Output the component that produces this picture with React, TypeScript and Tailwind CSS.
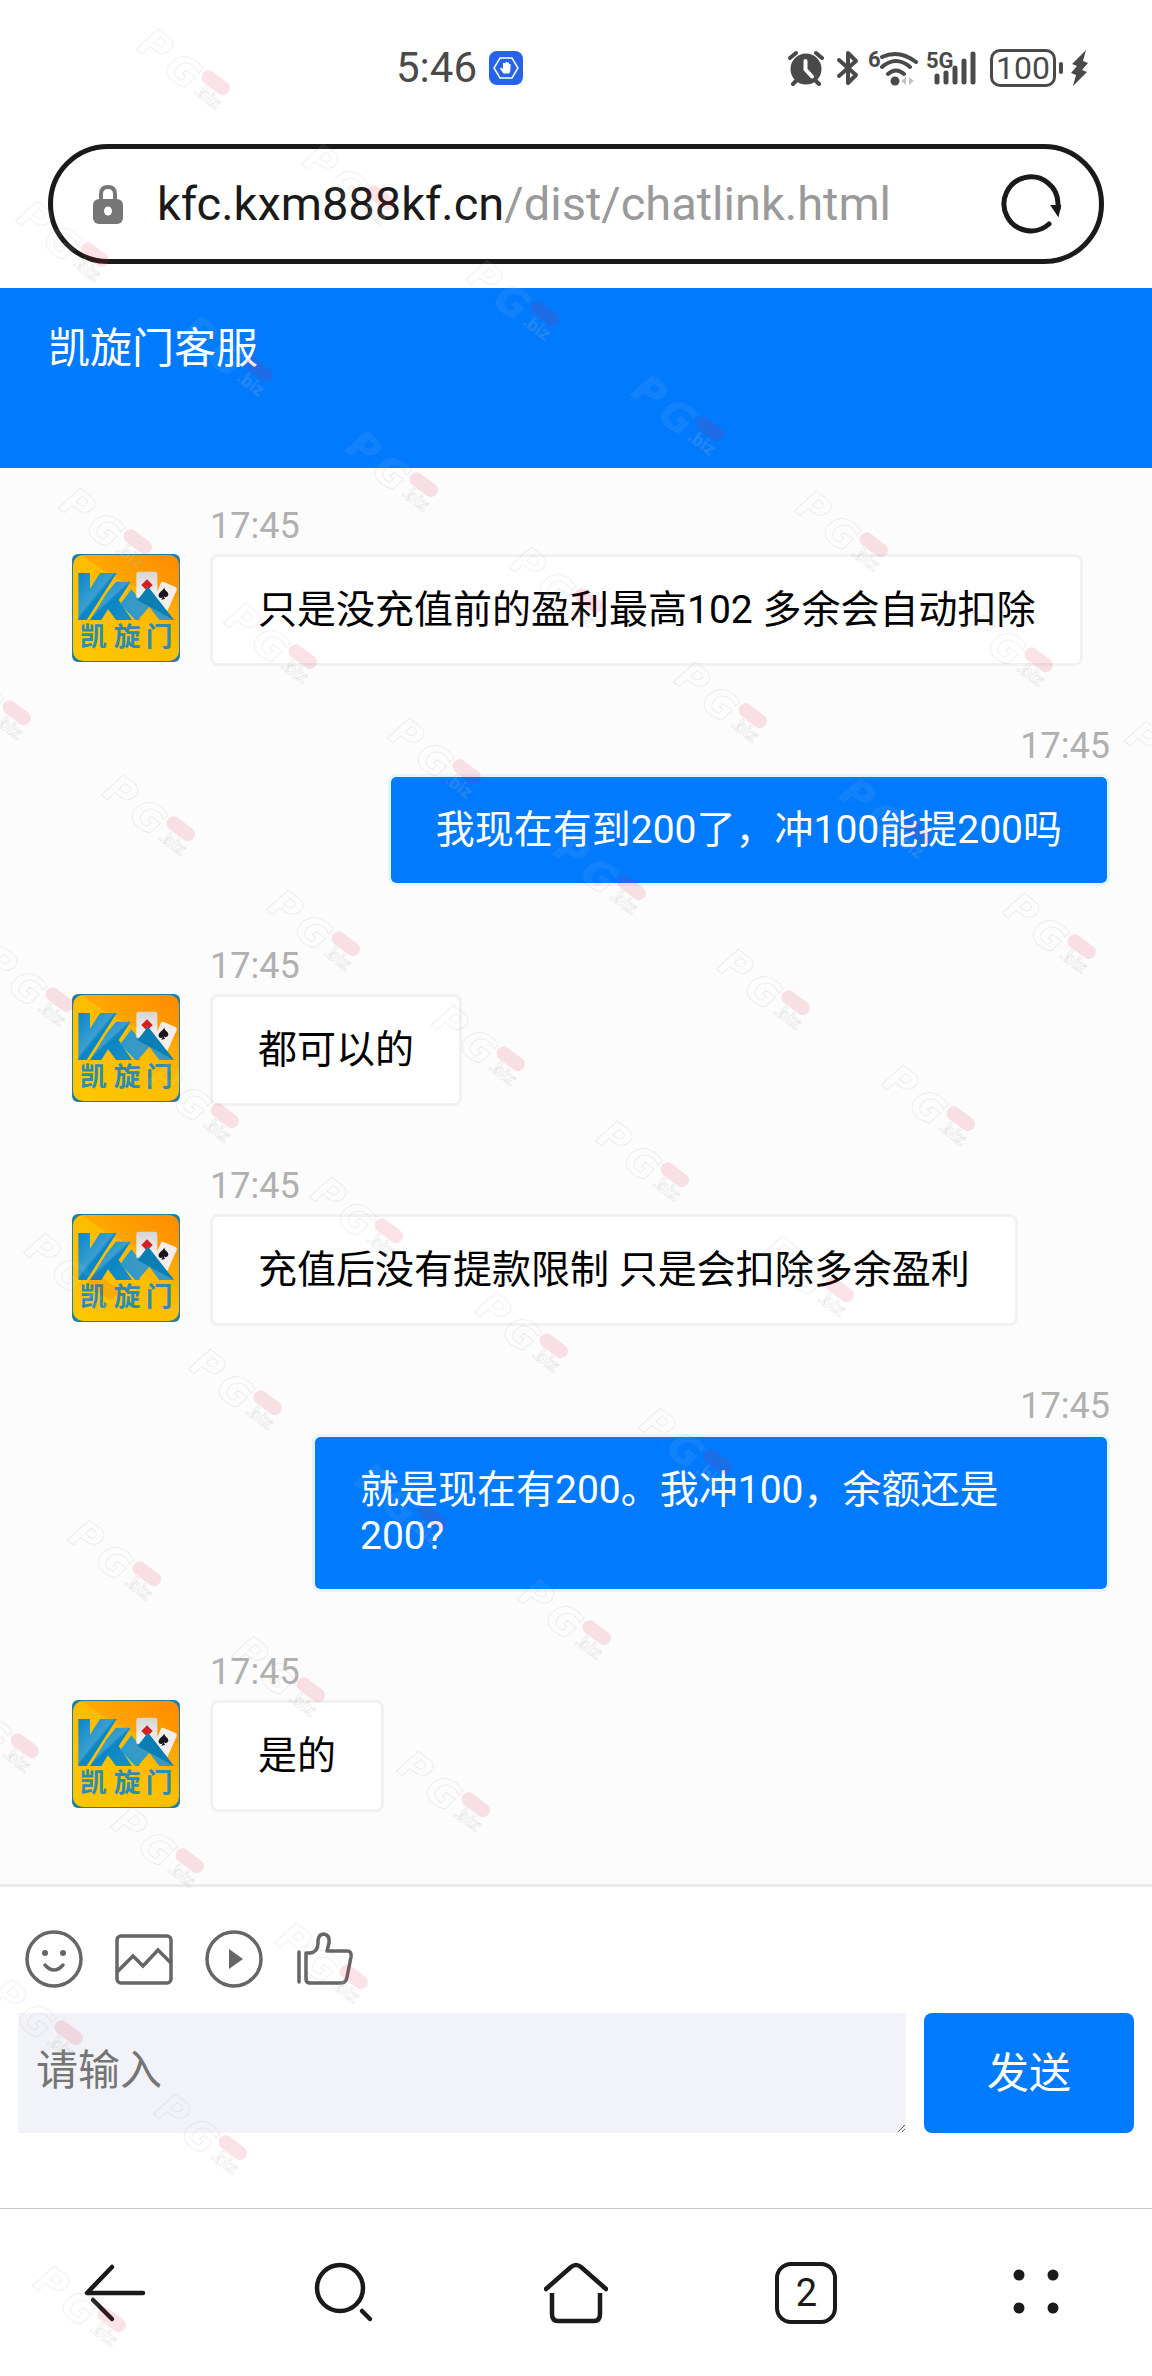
import { useState } from "react";

interface Message {
  id: number;
  from: "agent" | "user";
  time: string;
  text: string;
}

const messages: Message[] = [
  { id: 1, from: "agent", time: "17:45", text: "只是没充值前的盈利最高102 多余会自动扣除" },
  { id: 2, from: "user", time: "17:45", text: "我现在有到200了，冲100能提200吗" },
  { id: 3, from: "agent", time: "17:45", text: "都可以的" },
  { id: 4, from: "agent", time: "17:45", text: "充值后没有提款限制 只是会扣除多余盈利" },
  { id: 5, from: "user", time: "17:45", text: "就是现在有200。我冲100，余额还是200?" },
  { id: 6, from: "agent", time: "17:45", text: "是的" },
];

const Avatar = () => (
  <svg className="size-[108px] shrink-0" viewBox="0 0 324 324" role="img" aria-label="凯旋门">
    <defs>
      <linearGradient id="gold" x1="0" y1="1" x2="1" y2="0">
        <stop offset="0" stopColor="#fdc800" />
        <stop offset="0.55" stopColor="#fdbc00" />
        <stop offset="1" stopColor="#ff8a00" />
      </linearGradient>
      <linearGradient id="blue" x1="0" y1="0" x2="1" y2="1">
        <stop offset="0" stopColor="#0a86cc" />
        <stop offset="0.45" stopColor="#3a9fd0" />
        <stop offset="0.5" stopColor="#0a86c4" />
        <stop offset="1" stopColor="#1a8fc8" />
      </linearGradient>
      <linearGradient id="card" x1="0" y1="0" x2="0" y2="1">
        <stop offset="0" stopColor="#d4d4d4" />
        <stop offset="1" stopColor="#ffffff" />
      </linearGradient>
    </defs>
    <rect width="324" height="324" rx="18" fill="#1c7fa6" />
    <rect x="3" y="3" width="318" height="318" rx="30" fill="url(#gold)" />
    <path d="M30 3H290Q321 3 321 34V130Q180 120 30 3Z" fill="#ff8c00" opacity="0.4" />
    <rect x="193" y="53" width="63" height="96" rx="7" fill="url(#card)" />
    <rect x="250" y="88" width="52" height="84" rx="7" fill="#f4eeea" transform="rotate(24 276 130)" />
    <path d="M225 76L242 93L225 110L208 93Z" fill="#d81e20" />
    <path d="M277 101C270 112 258 116 260 126C262 134 270 133 273 128L268 138L279 134L275 127C281 132 289 129 289 121C289 112 278 111 277 101Z" fill="#191624" />
    <path d="M19 57H54V104L84 57H134L44 198H19Z" fill="url(#blue)" />
    <path d="M132 83H176L140 138L180 198H132L108 166L88 198H54L104 118Z" fill="url(#blue)" />
    <path d="M178 106L194 126L165 148L204 198H190L145 150Z" fill="#2a9bd0" />
    <path d="M228 98L306 198H262L232 158L198 198L164 146L190 128L204 134Z" fill="#3a98c4" />
    <path d="M228 98L306 198L196 138Z" fill="#0b7fb4" />
    <text x="24 125 221" y="276" fontSize="80" fontWeight="700" fill="#2a8db4" fontFamily="Noto Sans CJK SC, sans-serif">
      凯旋门
    </text>
  </svg>
);

const StatusBar = () => (
  <div className="flex h-[136px] items-center justify-between pr-[64px] pl-[396px] text-[#4a4a4a]">
    <div className="flex items-center gap-3">
      <span className="text-[42px] leading-none">5:46</span>
      <svg className="size-[34px]" viewBox="0 0 34 34" aria-hidden="true">
        <rect width="34" height="34" rx="8" fill="#2563eb" />
        <path d="M11 7H23L29 17L23 27H11L5 17Z" fill="none" stroke="#fff" strokeWidth="1.500" />
        <path d="M14 12V18L12 16.500Q10.500 17 11.500 18.500L14.500 22.500H20Q21.500 21 21.500 18V13H20V11.500H18V11H16.500V12Z" fill="#fff" />
      </svg>
    </div>
    <div className="flex items-center">
      <svg className="mr-3 h-9 w-9" viewBox="0 0 36 36" fill="none" stroke="currentColor" aria-hidden="true">
        <circle cx="18" cy="19" r="15.500" fill="currentColor" stroke="none" />
        <path d="M2 8L8 3M34 8L28 3M9 30L5 34M27 30L31 34" strokeWidth="4" strokeLinecap="round" />
        <path d="M17.500 11V19.500L24 26.500" stroke="#fff" strokeWidth="4" strokeLinecap="round" />
      </svg>
      <svg className="mr-2 h-9 w-6" viewBox="0 0 24 36" fill="none" stroke="currentColor" strokeWidth="4" strokeLinecap="round" strokeLinejoin="round" aria-hidden="true">
        <path d="M3 10L20 25L12 33V3L20 11L3 26" />
      </svg>
      <svg className="mr-2 h-9 w-[50px]" viewBox="0 0 50 36" fill="none" stroke="currentColor" strokeWidth="4" strokeLinecap="round" aria-hidden="true">
        <text x="0" y="17" fontSize="22" fontWeight="700" fontFamily="Liberation Sans Narrow, Roboto, sans-serif" fill="currentColor" stroke="none">6</text>
        <path d="M14 7Q31 -1 48 12M14 17Q28 5 42 17M20 24Q28 17 36 24" />
        <circle cx="27" cy="31" r="4.500" fill="currentColor" stroke="none" />
        <path d="M38 27V35L33 31ZM41 27V35L46 31Z" fill="#c4c4c4" stroke="none" />
      </svg>
      <svg className="mr-3 h-9 w-[52px]" viewBox="0 0 52 36" aria-hidden="true">
        <text x="0" y="18" fontSize="22" fontWeight="700" fontFamily="Liberation Sans Narrow, Roboto, sans-serif" fill="currentColor">5G</text>
        <path d="M11 26V32M20 23V32M29 18V32M38 11V32M47 4V32" stroke="currentColor" strokeWidth="5" strokeLinecap="round" />
      </svg>
      <div className="flex h-[38px] w-[66px] items-center justify-center rounded-[10px] border-3 border-current text-[32px] leading-none">
        100
      </div>
      <div className="mr-2 ml-[3px] h-3 w-1 rounded-full bg-current" />
      <svg className="h-9 w-[17px]" viewBox="0 0 17 36" fill="currentColor" aria-hidden="true">
        <path d="M15 0L1 14L6 16L0 23L5 25L2 36L16 22L11 20L17 13L12 11Z" />
      </svg>
    </div>
  </div>
);

const AddressBar = () => (
  <div className="px-[48px] pt-2 pb-6">
    <div className="flex h-[120px] items-center rounded-full border-5 border-[#1a1a1a] pr-9 pl-[40px]">
      <svg className="h-10 w-[30px]" viewBox="0 0 30 40" aria-hidden="true">
        <path d="M8 17V10Q8 3 15 3T22 10V17" fill="none" stroke="#767676" strokeWidth="4" />
        <rect y="15" width="30" height="25" rx="6" fill="#767676" />
        <ellipse cx="15" cy="27" rx="4" ry="4.500" fill="#fff" />
      </svg>
      <p className="ml-[34px] flex-1 text-[47px] leading-[50px] text-[#9a9a9a]">
        <span className="text-[#1a1a1a]">kfc.kxm888kf.cn</span>/dist/chatlink.html
      </p>
      <button type="button" aria-label="刷新">
        <svg className="size-[62px]" viewBox="0 0 62 62" fill="none" stroke="#1a1a1a" strokeWidth="5" strokeLinecap="round">
          <path d="M48 51A27 27 0 1 1 57 31V36" />
          <path d="M51 33H59L57 42Z" fill="#1a1a1a" strokeWidth="2" />
        </svg>
      </button>
    </div>
  </div>
);

const MessageItem = ({ message }: { message: Message }) => {
  const isUser = message.from === "user";

  return (
    <li className={isUser ? "flex justify-end" : "flex items-end gap-[30px]"}>
      {!isUser && (
        <div className="mb-1">
          <Avatar />
        </div>
      )}
      <div className={isUser ? "flex max-w-[798px] flex-col items-end" : "flex flex-col items-start"}>
        <time className="mb-2 text-[36px] leading-[40px] text-[#b0b0b0]">{message.time}</time>
        <p
          className={
            isUser
              ? "rounded-lg border-3 border-[#e4f5ff] bg-[#007aff] bg-clip-padding px-[45px] py-[30px] text-[39px] leading-[46px] text-white"
              : "rounded-lg border-3 border-[#f1f1f1] bg-white px-[45px] py-[30px] text-[39px] leading-[46px] text-black"
          }
        >
          {message.text}
        </p>
      </div>
    </li>
  );
};

const Composer = () => {
  const [draft, setDraft] = useState("");

  return (
    <form className="border-t-3 border-[#ebebeb] px-[18px] pt-[42px] pb-[75px]" onSubmit={(e) => e.preventDefault()}>
      <div className="mb-6 flex gap-[30px] px-[6px] text-[#666]">
        <button type="button" aria-label="表情">
          <svg className="size-[60px]" viewBox="0 0 60 60" fill="none" stroke="currentColor" strokeWidth="3.500" strokeLinecap="round">
            <circle cx="30" cy="30" r="27" />
            <circle cx="21" cy="24" r="3" fill="currentColor" stroke="none" />
            <circle cx="39" cy="24" r="3" fill="currentColor" stroke="none" />
            <path d="M21 36Q30 46 39 36" />
          </svg>
        </button>
        <button type="button" aria-label="图片">
          <svg className="size-[60px]" viewBox="0 0 60 60" fill="none" stroke="currentColor" strokeWidth="3.500">
            <rect x="3" y="7" width="54" height="47" rx="4" />
            <path d="M3 43L19 27L29 37L44 21L57 34" />
          </svg>
        </button>
        <button type="button" aria-label="视频">
          <svg className="size-[60px]" viewBox="0 0 60 60" fill="none" stroke="currentColor" strokeWidth="3.500">
            <circle cx="30" cy="30" r="27" />
            <path d="M25 20L39 30L25 40Z" fill="currentColor" stroke="none" />
          </svg>
        </button>
        <button type="button" aria-label="评价">
          <svg className="size-[60px]" viewBox="0 0 60 60" fill="none" stroke="currentColor" strokeWidth="3.500" strokeLinecap="round" strokeLinejoin="round">
            <path d="M5 23V53" />
            <path d="M12 24H16Q24 23 24 14V11Q25 5 30 5Q36 6 35 14L33 22H53Q58 22 57 28L53 48Q52 54 47 54H16Q12 54 12 50Z" />
          </svg>
        </button>
      </div>
      <div className="flex gap-[18px]">
        <textarea
          aria-label="消息"
          placeholder="请输入"
          rows={1}
          value={draft}
          onChange={(e) => setDraft(e.target.value)}
          className="h-[120px] min-w-0 flex-1 resize bg-[#f2f3f8] px-[18px] py-[33px] text-[42px] leading-[50px] outline-none placeholder:text-[#757575]"
        />
        <button type="submit" className="h-[120px] w-[210px] rounded-lg bg-[#007aff] text-[42px] text-white">
          发送
        </button>
      </div>
    </form>
  );
};

const BottomNav = () => (
  <nav className="grid h-[168px] grid-cols-5 items-center justify-items-center border-t border-[#c8c8c8] text-[#1a1a1a]">
    <button type="button" aria-label="返回">
      <svg className="size-16" viewBox="0 0 64 64" fill="none" stroke="currentColor" strokeWidth="4.500" strokeLinecap="round" strokeLinejoin="round">
        <path d="M29 6L4 32H60" />
        <path d="M10 39L29 58" />
      </svg>
    </button>
    <button type="button" aria-label="搜索">
      <svg className="size-16" viewBox="0 0 64 64" fill="none" stroke="currentColor" strokeWidth="4.500" strokeLinecap="round">
        <circle cx="26" cy="27" r="23" />
        <path d="M48 50L56 58" />
      </svg>
    </button>
    <button type="button" aria-label="主页">
      <svg className="size-16" viewBox="0 0 64 64" fill="none" stroke="currentColor" strokeWidth="4.500" strokeLinecap="round">
        <path d="M2 28L27 6Q32 2 37 6L62 28" />
        <path d="M8 32V53Q8 60 14 60H50Q56 60 56 53V32" strokeLinecap="butt" />
      </svg>
    </button>
    <button
      type="button"
      aria-label="标签页"
      className="flex size-[62px] items-center justify-center rounded-2xl border-4 border-current text-[38px] leading-none"
    >
      2
    </button>
    <button type="button" aria-label="菜单">
      <svg className="size-16" viewBox="0 0 64 64" fill="currentColor">
        <circle cx="14" cy="14" r="5.500" />
        <circle cx="48" cy="14" r="5.500" />
        <circle cx="14" cy="47" r="5.500" />
        <circle cx="48" cy="47" r="5.500" />
      </svg>
    </button>
  </nav>
);

const marks = Array.from({ length: 70 }, (_, i) => {
  const col = i % 7;
  const row = Math.floor(i / 7);
  return { x: Math.round(155 + col * 164.6 - row * 121.3), y: Math.round(47 + col * 115.4 + row * 171.6) };
}).filter(({ x }) => x > -75 && x < 1160);

// Repeated diagonal brand mark laid over the whole screen
const Watermark = () => (
  <svg className="pointer-events-none absolute inset-0 size-full overflow-hidden" aria-hidden="true">
    {marks.map(({ x, y }) => (
      <g key={`${x}-${y}`} transform={`translate(${x} ${y}) rotate(37)`} fontWeight="700" textAnchor="middle">
        <g
          fill="#fff"
          fillOpacity="0.08"
          stroke="#888"
          strokeOpacity="0.15"
          strokeWidth="1"
          fontSize="40"
          fontStyle="italic"
          fontFamily="DejaVu Sans, sans-serif"
        >
          <text x="0" y="13">P</text>
          <text x="37" y="16">G</text>
        </g>
        <rect x="54" y="-15" width="32" height="14" rx="7" fill="#e0203a" fillOpacity="0.13" />
        <text x="72" y="14" fontSize="18" fill="#fff" fillOpacity="0.1" stroke="#888" strokeOpacity="0.16" strokeWidth="1">.biz</text>
      </g>
    ))}
  </svg>
);

const App = () => {
  return (
    <div className="relative flex min-h-screen flex-col bg-white font-[Roboto,'Noto_Sans_CJK_SC',sans-serif]">
      <StatusBar />
      <AddressBar />
      <header className="h-[180px] bg-[#007aff] px-[48px] pt-9 text-white">
        <h1 className="text-[42px] leading-[50px]">凯旋门客服</h1>
      </header>
      <main className="flex-1 bg-[#fcfcfc] pt-[38px] pr-[42px] pb-[72px] pl-[72px]">
        <ul className="flex flex-col gap-[60px]">
          {messages.map((message) => (
            <MessageItem key={message.id} message={message} />
          ))}
        </ul>
      </main>
      <Composer />
      <BottomNav />
      <Watermark />
    </div>
  );
};

export default App;
